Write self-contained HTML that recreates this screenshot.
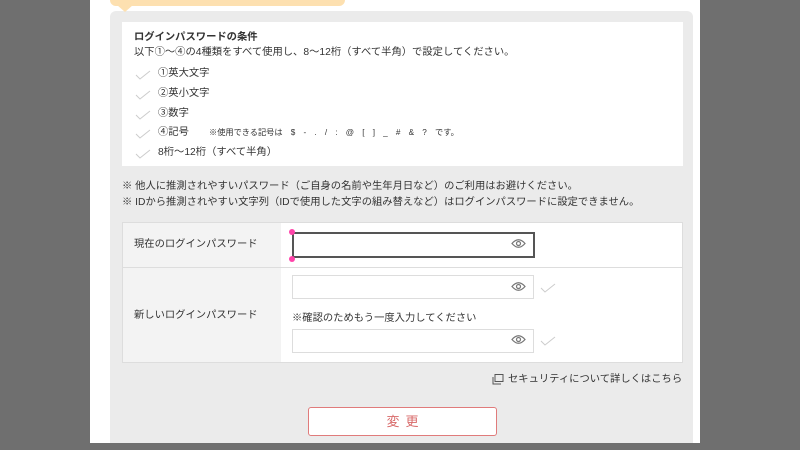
<!DOCTYPE html>
<html><head><meta charset="utf-8"><style>
*{margin:0;padding:0;box-sizing:border-box}
body{width:800px;height:450px;background:#6f6f6f;position:relative;overflow:hidden;font-family:"Liberation Sans","Noto Sans CJK JP",sans-serif;color:#333}
.abs{position:absolute}
.panel{left:90px;top:0;width:610px;height:443px;background:#fff}
.gbox{left:110px;top:11px;width:583px;height:432px;background:#ebebeb;border-radius:6px 6px 0 0}
.bubble{left:110px;top:-6px;width:235px;height:12px;background:#fde0b0;border-radius:0 0 6px 6px}
.ptr{left:117px;top:5px;width:0;height:0;border-left:8px solid transparent;border-right:8px solid transparent;border-top:7px solid #fde0b0}
.cond{left:122px;top:22px;width:561px;height:144px;background:#fff}
.t{font-size:10.3px;white-space:nowrap;line-height:1}
.ck{width:16px;height:10px}
.tbl{left:122px;top:222px;width:561px;height:141px;background:#fff;border:1px solid #ddd}
.lc{left:0;top:0;width:158px;height:139px;background:#f3f3f3}
.inp{background:#fff;border:1px solid #ddd;width:242px;height:24px}
.eye{width:15px;height:11px}
</style></head><body>
<div class="abs panel"></div>
<div class="abs gbox"></div>
<div class="abs bubble"></div>
<div class="abs ptr"></div>
<div class="abs cond"></div>
<div class="abs t" style="left:134px;top:33px;font-weight:bold">ログインパスワードの条件</div>
<div class="abs t" style="left:134px;top:48px">以下①～④の4種類をすべて使用し、8～12桁（すべて半角）で設定してください。</div>
<svg class="abs ck" style="left:135px;top:70px" viewBox="0 0 16 10"><path d="M1 5l4 4 10-8" fill="none" stroke="#ccc" stroke-width="1"/></svg>
<div class="abs t" style="left:158px;top:69px">①英大文字</div>
<svg class="abs ck" style="left:135px;top:90px" viewBox="0 0 16 10"><path d="M1 5l4 4 10-8" fill="none" stroke="#ccc" stroke-width="1"/></svg>
<div class="abs t" style="left:158px;top:89px">②英小文字</div>
<svg class="abs ck" style="left:135px;top:110px" viewBox="0 0 16 10"><path d="M1 5l4 4 10-8" fill="none" stroke="#ccc" stroke-width="1"/></svg>
<div class="abs t" style="left:158px;top:109px">③数字</div>
<svg class="abs ck" style="left:135px;top:129px" viewBox="0 0 16 10"><path d="M1 5l4 4 10-8" fill="none" stroke="#ccc" stroke-width="1"/></svg>
<div class="abs t" style="left:158px;top:128px">④記号</div>
<div class="abs t" style="left:209px;top:129px;font-size:8.2px">※使用できる記号は　$　-　.　/　:　@　[　]　_　#　&amp;　?　です。</div>
<svg class="abs ck" style="left:135px;top:149px" viewBox="0 0 16 10"><path d="M1 5l4 4 10-8" fill="none" stroke="#ccc" stroke-width="1"/></svg>
<div class="abs t" style="left:158px;top:148px">8桁～12桁（すべて半角）</div>
<div class="abs t" style="left:122px;top:182px">※ 他人に推測されやすいパスワード（ご自身の名前や生年月日など）のご利用はお避けください。</div>
<div class="abs t" style="left:122px;top:198px">※ IDから推測されやすい文字列（IDで使用した文字の組み替えなど）はログインパスワードに設定できません。</div>
<div class="abs tbl"><div class="abs lc"></div><div class="abs" style="left:0;top:44px;width:559px;border-top:1px solid #ddd"></div></div>
<div class="abs t" style="left:134px;top:240px">現在のログインパスワード</div>
<div class="abs t" style="left:134px;top:311px">新しいログインパスワード</div>
<div class="abs inp" style="left:292px;top:232px;width:243px;height:26px;border:2px solid #555"></div>
<div class="abs inp" style="left:292px;top:275px"></div>
<div class="abs t" style="left:292px;top:314px">※確認のためもう一度入力してください</div>
<div class="abs inp" style="left:292px;top:329px"></div>
<svg class="abs eye" style="left:511px;top:238px" viewBox="0 0 15 11"><path d="M1 5.5Q7.5-2 14 5.5Q7.5 13 1 5.5Z" fill="none" stroke="#777" stroke-width="1.2"/><circle cx="7.5" cy="5.5" r="2" fill="none" stroke="#777" stroke-width="1.2"/></svg>
<svg class="abs eye" style="left:511px;top:281px" viewBox="0 0 15 11"><path d="M1 5.5Q7.5-2 14 5.5Q7.5 13 1 5.5Z" fill="none" stroke="#777" stroke-width="1.2"/><circle cx="7.5" cy="5.5" r="2" fill="none" stroke="#777" stroke-width="1.2"/></svg>
<svg class="abs eye" style="left:511px;top:334px" viewBox="0 0 15 11"><path d="M1 5.5Q7.5-2 14 5.5Q7.5 13 1 5.5Z" fill="none" stroke="#777" stroke-width="1.2"/><circle cx="7.5" cy="5.5" r="2" fill="none" stroke="#777" stroke-width="1.2"/></svg>
<svg class="abs ck" style="left:540px;top:283px" viewBox="0 0 16 10"><path d="M1 5l4 4 10-8" fill="none" stroke="#ccc"/></svg>
<svg class="abs ck" style="left:540px;top:336px" viewBox="0 0 16 10"><path d="M1 5l4 4 10-8" fill="none" stroke="#ccc"/></svg>
<div class="abs" style="left:289px;top:229px;width:6px;height:6px;border-radius:50%;background:#f4a"></div>
<div class="abs" style="left:289px;top:256px;width:6px;height:6px;border-radius:50%;background:#f4a"></div>
<svg class="abs" style="left:492px;top:374px;width:12px;height:11px" viewBox="0 0 12 11"><rect x="3" y="0.5" width="8" height="7" fill="none" stroke="#555"/><path d="M1 3v7h8" fill="none" stroke="#555"/></svg>
<div class="abs t" style="left:508px;top:375px">セキュリティについて詳しくはこちら</div>
<div class="abs" style="left:308px;top:407px;width:189px;height:29px;background:#fff;border:1px solid #e07b7b;border-radius:3px;color:#d86a6a;font-size:13px;text-align:center;line-height:27px;letter-spacing:6px;text-indent:6px">変更</div>
</body></html>
